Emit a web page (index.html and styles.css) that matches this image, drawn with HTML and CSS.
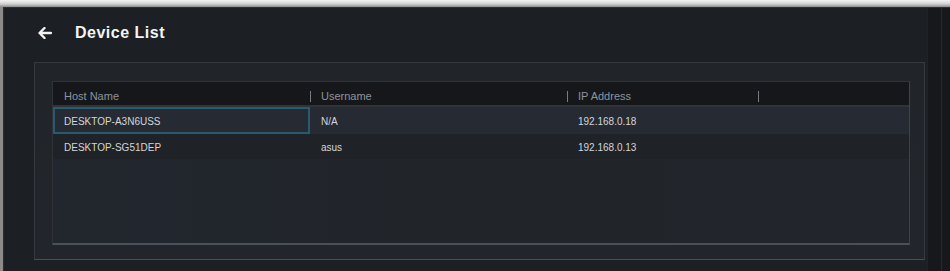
FILE: index.html
```html
<!DOCTYPE html>
<html>
<head>
<meta charset="utf-8">
<link rel="stylesheet" href="styles.css">
</head>
<body>
<div class="screen">
  <div class="app">
    <div class="main">
      <div class="titlebar">
        <svg class="back" width="14" height="12" viewBox="0 0 14 12"><path d="M6.5 1 L1.5 6 L6.5 11 M1.8 6 H13" fill="none" stroke="#f2f2f2" stroke-width="2.4" stroke-linecap="round" stroke-linejoin="round"/></svg>
        <span class="title">Device List</span>
      </div>
      <div class="panel">
        <div class="table">
          <div class="row head">
            <div class="cell c1">Host Name</div>
            <div class="cell c2"><span class="sep"></span>Username</div>
            <div class="cell c3"><span class="sep"></span>IP Address</div>
            <div class="cell c4"><span class="sep"></span></div>
          </div>
          <div class="row r1">
            <div class="cell c1 sel">DESKTOP-A3N6USS</div>
            <div class="cell c2">N/A</div>
            <div class="cell c3">192.168.0.18</div>
            <div class="cell c4"></div>
          </div>
          <div class="row r2">
            <div class="cell c1">DESKTOP-SG51DEP</div>
            <div class="cell c2">asus</div>
            <div class="cell c3">192.168.0.13</div>
            <div class="cell c4"></div>
          </div>
        </div>
      </div>
    </div>
    <div class="edge"></div>
  </div>
</div>
</body>
</html>
```
FILE: styles.css
```css
* { box-sizing: border-box; }
html, body { margin: 0; padding: 0; }
body {
  width: 950px;
  height: 271px;
  overflow: hidden;
  background: #1c1f23;
  font-family: "Liberation Sans", Arial, sans-serif;
}
.screen {
  height: 271px;
  padding: 7px 0 0 3px;
  background: linear-gradient(#f4f4f4 0, #d0d0d0 4px, #8a8a8a 7px, #8a8a8a 100%);
}
.app {
  display: flex;
  height: 264px;
  background: #1c1f23;
  border-left: 1px solid #2a2d31;
  border-top: 1px solid #2c2f33;
}
.main {
  flex: 1;
  padding: 0 0 0 30px;
}
.titlebar {
  display: flex;
  align-items: center;
  height: 50px;
  padding: 0 0 0 4px;
}
.back { display: block; margin-right: 23px; }
.title {
  color: #f4f4f4;
  font-weight: bold;
  font-size: 16px;
  letter-spacing: 0.5px;
}
.panel {
  width: 891px;
  height: 198px;
  margin-top: 4px;
  background: linear-gradient(#212429, #22262c);
  border: 1px solid #353a41;
  border-bottom-color: #4a4f56;
  padding: 18px 14px 14px 17px;
}
.table {
  height: 164px;
  background: linear-gradient(90deg, #22262e, #21252a 50%, #22262c);
  border: 1px solid #2e333a;
  border-bottom: 2px solid #4b5158;
  border-right-color: #3d434a;
}
.row {
  display: flex;
  align-items: stretch;
}
.cell {
  position: relative;
  display: flex;
  align-items: center;
  font-size: 10px;
  color: #d3d6d9;
  padding-left: 11px;
}
.c1 { width: 257px; }
.c2 { width: 257px; }
.c3 { width: 191px; }
.c4 { flex: 1; }
.head {
  height: 25px;
  background: #15171b;
  border-bottom: 2px solid #2f3439;
}
.head .cell { color: #8e949b; font-size: 11px; padding-top: 4px; }
.sep {
  position: absolute;
  left: 0;
  top: 9px;
  width: 1px;
  height: 11px;
  background: #777c82;
}
.r1 {
  height: 27px;
  background: #262a33;
}
.r1 .cell { padding-top: 2px; }
.r2 {
  height: 26px;
  background: #1f2227;
  border-bottom: 1px solid #23272d;
}
.r2 .cell { padding-top: 2px; }
.sel {
  border: 2px solid #2b5a6e;
  padding-left: 9px;
}
.edge {
  width: 23px;
  background: #16181b;
  border-left: 1px solid #1f2226;
  display: flex;
  justify-content: center;
}
.edge::after {
  content: "";
  width: 1px;
  background: #26292d;
  margin-left: 4px;
}
```
